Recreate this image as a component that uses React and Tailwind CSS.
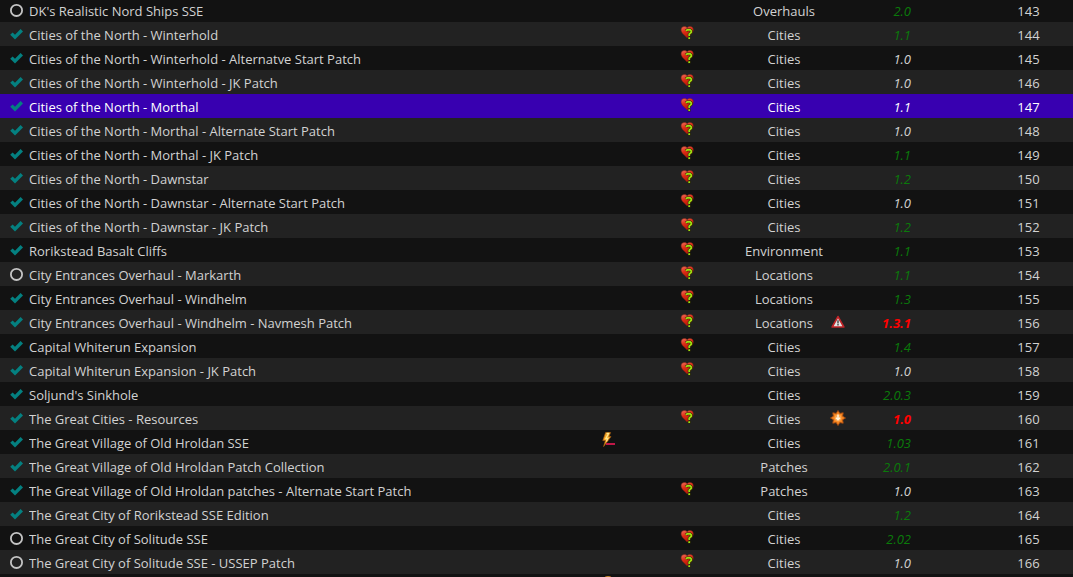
import React, { useState } from "react";

const E = "endorse";
const mods = [
  { name: "DK's Realistic Nord Ships SSE", category: "Overhauls", version: "2.0", tone: "ok", priority: 143, off: true },
  { name: "Cities of the North - Winterhold", flag: E, category: "Cities", version: "1.1", tone: "ok", priority: 144 },
  { name: "Cities of the North - Winterhold - Alternatve Start Patch", flag: E, category: "Cities", version: "1.0", priority: 145 },
  { name: "Cities of the North - Winterhold - JK Patch", flag: E, category: "Cities", version: "1.0", priority: 146 },
  { name: "Cities of the North - Morthal", flag: E, category: "Cities", version: "1.1", priority: 147, selected: true },
  { name: "Cities of the North - Morthal - Alternate Start Patch", flag: E, category: "Cities", version: "1.0", priority: 148 },
  { name: "Cities of the North - Morthal - JK Patch", flag: E, category: "Cities", version: "1.1", tone: "ok", priority: 149 },
  { name: "Cities of the North - Dawnstar", flag: E, category: "Cities", version: "1.2", tone: "ok", priority: 150 },
  { name: "Cities of the North - Dawnstar - Alternate Start Patch", flag: E, category: "Cities", version: "1.0", priority: 151 },
  { name: "Cities of the North - Dawnstar - JK Patch", flag: E, category: "Cities", version: "1.2", tone: "ok", priority: 152 },
  { name: "Rorikstead Basalt Cliffs", flag: E, category: "Environment", version: "1.1", tone: "ok", priority: 153 },
  { name: "City Entrances Overhaul - Markarth", flag: E, category: "Locations", version: "1.1", tone: "ok", priority: 154, off: true },
  { name: "City Entrances Overhaul - Windhelm", flag: E, category: "Locations", version: "1.3", tone: "ok", priority: 155 },
  { name: "City Entrances Overhaul - Windhelm - Navmesh Patch", flag: E, category: "Locations", version: "1.3.1", tone: "bad", notice: "warning", priority: 156 },
  { name: "Capital Whiterun Expansion", flag: E, category: "Cities", version: "1.4", tone: "ok", priority: 157 },
  { name: "Capital Whiterun Expansion - JK Patch", flag: E, category: "Cities", version: "1.0", priority: 158 },
  { name: "Soljund's Sinkhole", category: "Cities", version: "2.0.3", tone: "ok", priority: 159 },
  { name: "The Great Cities - Resources", flag: E, category: "Cities", version: "1.0", tone: "bad", notice: "update", priority: 160 },
  { name: "The Great Village of Old Hroldan SSE", conflict: true, category: "Cities", version: "1.03", tone: "ok", priority: 161 },
  { name: "The Great Village of Old Hroldan Patch Collection", category: "Patches", version: "2.0.1", tone: "ok", priority: 162 },
  { name: "The Great Village of Old Hroldan patches - Alternate Start Patch", flag: E, category: "Patches", version: "1.0", priority: 163 },
  { name: "The Great City of Rorikstead SSE Edition", category: "Cities", version: "1.2", tone: "ok", priority: 164 },
  { name: "The Great City of Solitude SSE", flag: E, category: "Cities", version: "2.02", tone: "ok", priority: 165, off: true },
  { name: "The Great City of Solitude SSE - USSEP Patch", flag: E, category: "Cities", version: "1.0", priority: 166, off: true },
];

const tones = {
  ok: "text-[#0a7a0a]",
  bad: "font-bold text-[#ff0000]",
};

function CheckMark() {
  return (
    <svg viewBox="0 0 14 14" className="pointer-events-none col-start-1 row-start-1 size-3.5">
      <path d="M0.2 7.8 2.6 5.4 5 7.8 10.6 2 13 4.4 5 12.4Z" fill="#048080" />
    </svg>
  );
}

function Ring() {
  return (
    <svg viewBox="0 0 14 14" className="pointer-events-none col-start-1 row-start-1 size-3.5">
      <circle cx="6.5" cy="7.4" r="5.6" fill="none" stroke="#c4c4c4" strokeWidth="1.8" />
    </svg>
  );
}

function HeartQuestion() {
  return (
    <svg viewBox="-0.6 0 14 14" className="mx-auto block size-3.5">
      <defs>
        <linearGradient id="heart" x1="0" y1="0" x2="0.4" y2="1">
          <stop offset="0" stopColor="#f0705a" />
          <stop offset="0.5" stopColor="#dc2c14" />
          <stop offset="1" stopColor="#b81808" />
        </linearGradient>
      </defs>
      <path d="M6.6 1.8C5.4 0.2 2.6 0 1.2 1.6 0 3.2 0.4 5.6 1.8 7.2L6.6 12 11.4 7.2C13 5.4 13 3 12 1.6 10.6 0 7.8 0.2 6.6 1.8Z" fill="url(#heart)" stroke="#7c2418" strokeWidth="0.5" />
      <path d="M5.4 4.9 6.6 3.8H9.6L10.6 4.8V6.4L8.6 8.2V10.2M8.6 11.1V13.4" fill="none" stroke="#2c2a06" strokeWidth="2.8" />
      <path d="M5.4 4.9 6.6 3.8H9.6L10.6 4.8V6.4L8.6 8.2V10M8.6 11.3V13.1" fill="none" stroke="#a0e010" strokeWidth="1.7" />
    </svg>
  );
}

function Lightning() {
  return (
    <svg viewBox="0 0 14 16" className="mx-auto block h-4 w-3.5">
      <path d="M4.6 0.6H9.6L7.8 4.6H10L2.6 14.6 4.4 8.6H1.8Z" fill="#f8a828" stroke="#a45c10" strokeWidth="0.7" />
      <path d="M5.6 1.4H7.6L4.8 6.6 6.8 6.4 5.4 9.4" fill="none" stroke="#ffe890" strokeWidth="1.2" />
      <rect x="5" y="11" width="9" height="2" fill="#c01848" />
    </svg>
  );
}

function Warning() {
  return (
    <svg viewBox="0 0 14 14" className="size-3.5">
      <path d="M7 1.6 12.8 12H1.2Z" fill="#e4e4e4" stroke="#c02428" strokeWidth="1.7" strokeLinejoin="round" />
      <path d="M7 5.2V8.4M7 9V10.6" stroke="#555" strokeWidth="1.6" />
    </svg>
  );
}

function Burst() {
  return (
    <svg viewBox="0 0 16 16" className="-ml-px size-4">
      <path d="M8 0.5 9.8 3.4 13.2 2.8 12.6 6.2 15.5 8 12.6 9.8 13.2 13.2 9.8 12.6 8 15.5 6.2 12.6 2.8 13.2 3.4 9.8 0.5 8 3.4 6.2 2.8 2.8 6.2 3.4Z" fill="#f48420" stroke="#a84c10" strokeWidth="0.9" />
      <circle cx="8" cy="8" r="3.4" fill="#fba850" />
      <path d="M8 4.4V9.6M6 7.8 8 9.8 10 7.8" fill="none" stroke="#fff4dc" strokeWidth="1.5" />
    </svg>
  );
}

function ModRow({ mod, index }) {
  const [enabled, setEnabled] = useState(!mod.off);
  const id = `mod-${mod.priority}`;
  const background = mod.selected
    ? "bg-[#3800b0] text-white"
    : index % 2
      ? "bg-[#222222]"
      : "bg-[#121212]";
  return (
    <tr className={`h-6 ${background}`} aria-selected={!!mod.selected}>
      <td className="p-0">
        <div className="flex items-center gap-[5px] pl-2.5">
          <span className="grid size-3.5 shrink-0">
            <input
              id={id}
              type="checkbox"
              checked={enabled}
              onChange={(e) => setEnabled(e.target.checked)}
              className="col-start-1 row-start-1 size-3.5 appearance-none"
            />
            {enabled ? <CheckMark /> : <Ring />}
          </span>
          <label htmlFor={id} className="truncate pt-0.5">{mod.name}</label>
        </div>
      </td>
      <td className="p-0 pt-0.5 align-top">{mod.conflict && <Lightning />}</td>
      <td className="p-0 pt-1 align-top">{mod.flag && <HeartQuestion />}</td>
      <td className="p-0 pt-0.5 pl-0.5 text-center">{mod.category}</td>
      <td className="p-0">
        <div className="flex items-center justify-between pr-[73px]">
          <span>
            {mod.notice === "warning" && <Warning />}
            {mod.notice === "update" && <Burst />}
          </span>
          <span className={`pt-0.5 italic ${tones[mod.tone] || ""}`}>{mod.version}</span>
        </div>
      </td>
      <td className="p-0 pt-0.5 text-center">{mod.priority}</td>
    </tr>
  );
}

export default function App() {
  return (
    <main className="flex h-screen flex-col overflow-hidden bg-[#121212] font-['Open_Sans','Noto_Sans',sans-serif] text-[13px] leading-5 text-[#d2d2d2]">
      <table className="-mt-0.5 w-full table-fixed border-collapse">
        <colgroup>
          <col />
          <col className="w-[62px]" />
          <col className="w-24" />
          <col className="w-24" />
          <col className="w-[153px]" />
          <col className="w-[89px]" />
        </colgroup>
        <tbody>
          {mods.map((mod, index) => (
            <ModRow key={mod.priority} mod={mod} index={index} />
          ))}
          <tr className="h-6 bg-[#121212]">
            <td className="p-0" />
            <td className="p-0 pt-0.5 align-top"><Lightning /></td>
            <td className="p-0" colSpan={4} />
          </tr>
        </tbody>
      </table>
    </main>
  );
}
